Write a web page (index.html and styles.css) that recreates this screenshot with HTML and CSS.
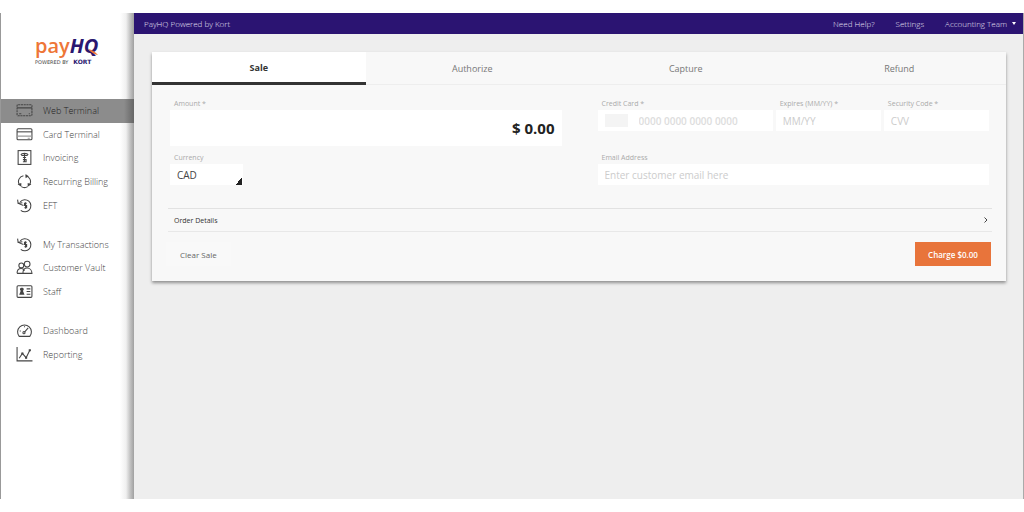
FILE: index.html
```html
<!DOCTYPE html>
<html lang="en">
<head>
  <meta charset="utf-8">
  <title>PayHQ Web Terminal</title>
  <link rel="stylesheet" href="styles.css">
</head>
<body>
  <div class="app">
    <aside class="sidebar">
      <div class="logo">
        <div class="logo-name"><span class="pay">pay</span><span class="hq">HQ</span></div>
        <div class="logo-sub"><span>POWERED BY</span><b>KORT</b></div>
        <svg class="swoosh" viewBox="0 0 10 6"><path d="M0 0c4 .5 7 2.500 10 6C7 5.500 3 4 0 0z"/></svg>
      </div>
      <nav>
        <div class="group">
          <a href="#" class="active">
            <svg viewBox="0 0 16 14"><rect x="1" y="1.500" width="14" height="10.500" rx="1" stroke-dasharray="2 0.600"/><path d="M1 4.500h14M3 10h2M12 10h1"/></svg>
            Web Terminal</a>
          <a href="#">
            <svg viewBox="0 0 16 14"><rect x="1" y="1.500" width="14" height="10.500" rx="1"/><path d="M1 4.500h14"/><path class="thin" d="M1 8.500h14M11 10.500h2"/></svg>
            Card Terminal</a>
          <a href="#">
            <svg viewBox="0 0 16 14"><rect x="2" y="0.500" width="12" height="13"/><path d="M4.500 4.500c1-2 6-2 7 0M5 5h6M8 3v8M6.500 7h3M6.500 9h3v2h-3"/></svg>
            Invoicing</a>
          <a href="#">
            <svg viewBox="0 0 16 14"><path d="M7 1.500A5.600 5.600 0 0 0 3.200 10M5 11.800a5.600 5.600 0 0 0 6 0M12.800 10A5.600 5.600 0 0 0 9 1.500"/><path class="fill" d="M1.500 9.500l3.500-1v3.500zM9 0l3 2-3 2zM14.500 9.500l-3.500-1v3.500z"/></svg>
            Recurring Billing</a>
          <a href="#">
            <svg viewBox="0 0 16 14"><path d="M4 3.500A5.700 5.700 0 1 1 4.500 11.500M1.500 1.500l.5 3.500 4-.5M2 5l5 2"/><path d="M10 5H8v2h2v2H8M9 4v6"/></svg>
            EFT</a>
        </div>
        <div class="group">
          <a href="#">
            <svg viewBox="0 0 16 14"><path d="M4 3.500A5.700 5.700 0 1 1 4.500 11.500M1.500 1.500l.5 3.500 4-.5M2 5l5 2"/><path d="M10 5H8v2h2v2H8M9 4v6"/></svg>
            My Transactions</a>
          <a href="#">
            <svg viewBox="0 0 16 14"><circle cx="5" cy="5" r="2.300"/><circle cx="10.500" cy="3.800" r="2.700"/><path d="M1 12.500c0-3 1.500-4.500 4-4.500 1.500 0 2.500 1 3 2M1 12.500h5M6.500 12.500c0-3 1.500-5 4-5s4.500 2 4.500 5z"/></svg>
            Customer Vault</a>
          <a href="#">
            <svg viewBox="0 0 16 14"><rect x="1" y="1.500" width="14" height="11" rx="1"/><path d="M10 4.500h3.500M10 7h3.500M10 9.500h3.500"/><path class="fill" d="M5.500 3.500a1.500 1.500 0 0 1 1 2.800L8 10H3l1.500-3.700a1.500 1.500 0 0 1 1-2.800z"/></svg>
            Staff</a>
        </div>
        <div class="group">
          <a href="#">
            <svg viewBox="0 0 16 14"><path d="M3 12.500a6.500 6.500 0 1 1 10 0zM3.500 7.500h1M8 3v1M11.500 4.500 8 8.500"/><circle cx="7.500" cy="9" r="1"/></svg>
            Dashboard</a>
          <a href="#">
            <svg viewBox="0 0 16 14"><path d="M1 0v13h14.500M3 10.500 6 6l3.500 4L13 3"/><path class="fill" d="M5 5h2v2H5zM8.500 9h2v2h-2zM12 2h2v2h-2z"/></svg>
            Reporting</a>
        </div>
      </nav>
    </aside>

    <div class="main">
      <header class="topbar">
        <span>PayHQ Powered by Kort</span>
        <div class="links">
          <a href="#">Need Help?</a>
          <a href="#">Settings</a>
          <a href="#" class="account">Accounting Team</a>
        </div>
      </header>

      <form class="card">
        <div class="tabs">
          <button type="button" class="active">Sale</button>
          <button type="button">Authorize</button>
          <button type="button">Capture</button>
          <button type="button">Refund</button>
        </div>

        <div class="fields">
          <div class="column">
            <div class="field">
              <label for="amount">Amount *</label>
              <input id="amount" class="amount" type="text" value="$ 0.00">
            </div>
            <div class="field currency">
              <label for="currency">Currency</label>
              <select id="currency"><option>CAD</option></select>
            </div>
          </div>
          <div class="column">
            <div class="card-row">
              <div class="field">
                <label for="number">Credit Card *</label>
                <div class="number-box">
                  <span class="brand"></span>
                  <input id="number" type="text" placeholder="0000 0000 0000 0000">
                </div>
              </div>
              <div class="field">
                <label for="expires">Expires (MM/YY) *</label>
                <input id="expires" type="text" placeholder="MM/YY">
              </div>
              <div class="field">
                <label for="cvv">Security Code *</label>
                <input id="cvv" type="text" placeholder="CVV">
              </div>
            </div>
            <div class="field">
              <label for="email">Email Address</label>
              <input id="email" type="text" placeholder="Enter customer email here">
            </div>
          </div>
        </div>

        <button type="button" class="details">
          <span>Order Details</span>
          <svg viewBox="0 0 6 8"><path d="M1.500 1.500 4 4 1.500 6.500"/></svg>
        </button>

        <div class="actions">
          <button type="reset" class="clear">Clear Sale</button>
          <button type="button" class="charge">Charge $0.00</button>
        </div>
      </form>
    </div>
  </div>
</body>
</html>
```

FILE: styles.css
```css
* {
  box-sizing: border-box;
}
body {
  margin: 0;
  background: #fff;
  font-family: "Open Sans", sans-serif;
  color: #444;
}
a {
  color: inherit;
  text-decoration: none;
}
button, input, select {
  font-family: inherit;
  border: 0;
  margin: 0;
}
.app {
  display: flex;
  height: 100vh;
  padding: 13px 0;
}

/* sidebar */
.sidebar {
  width: 134px;
  flex-shrink: 0;
  border-left: 1px solid #999;
  background: linear-gradient(to left, #a0a0a0, #c4c4c4 4px, #f0f0f0 8px, #fff 14px);
}
.logo {
  position: relative;
  height: 86px;
  padding: 20px 0 0 34px;
}
.logo-name {
  font-size: 20px;
  line-height: 26px;
  font-weight: 600;
}
.logo-name .pay {
  color: #ee7637;
}
.logo-name .hq {
  color: #2a1770;
  font-style: italic;
  font-weight: 700;
}
.logo-sub {
  display: flex;
  gap: 5px;
  font-family: "DejaVu Sans", sans-serif;
  font-size: 5px;
  line-height: 6px;
  color: #444;
}
.logo-sub b {
  font-size: 6px;
  color: #2a1770;
}
/* orange tail over the Q */
.logo .swoosh {
  position: absolute;
  left: 87px;
  top: 36px;
  width: 10px;
  height: 6px;
  fill: #ee7637;
  stroke: none;
}
.group {
  display: grid;
  grid-auto-rows: 1fr;
  height: 118px;
  margin-bottom: 16px;
}
.group:nth-child(2) {
  height: 70px;
}
.group:nth-child(3) {
  height: 47px;
}
.group a {
  display: flex;
  align-items: center;
  gap: 10px;
  padding-left: 15px;
  font-size: 9px;
  font-weight: 300;
}
.group a.active {
  background: linear-gradient(to left, #666, #8c8c8c 10px);
  color: #222;
}
svg {
  fill: none;
  stroke: #444;
  stroke-width: 1;
}
.group svg {
  width: 17px;
  height: 15px;
}
svg .fill {
  fill: #444;
  stroke: none;
}
svg .thin {
  stroke: #999;
}

/* main area */
.main {
  flex: 1;
  background: #eee;
  border-right: 1px solid #aaa;
}
.topbar {
  display: flex;
  justify-content: space-between;
  align-items: center;
  height: 21px;
  padding: 0 7px 0 10px;
  background: #2b1472;
  color: #e6e2f2;
  font-size: 8px;
  font-weight: 300;
}
.links {
  display: flex;
  gap: 21px;
}
.account::after {
  content: "";
  display: inline-block;
  margin-left: 5px;
  vertical-align: 2px;
  border: 2px solid transparent;
  border-top: 3px solid #fff;
  border-bottom: 0;
}
.card {
  margin: 18px 17px 0 18px;
  background: #f8f8f8;
  box-shadow: 0 2px 3px rgba(0, 0, 0, 0.4);
}
.tabs {
  display: grid;
  grid-template-columns: repeat(4, 1fr);
  height: 33px;
}
.tabs button {
  background: none;
  border-bottom: 1px solid #eee;
  font-size: 9px;
  color: #777;
}
.tabs .active {
  background: #fff;
  border-bottom: 3px solid #333;
  font-weight: 700;
  color: #333;
}
.fields {
  display: grid;
  grid-template-columns: 1fr 1fr;
  gap: 36px;
  padding: 13px 17px 0 18px;
}
.column {
  display: flex;
  flex-direction: column;
}
.field {
  display: flex;
  flex-direction: column;
}
label {
  padding-left: 4px;
  font-size: 7px;
  line-height: 12px;
  color: #aaa;
}
input, select {
  width: 100%;
  height: 21px;
  padding: 0 7px;
  background: #fff;
  font-size: 10px;
  color: #444;
}
input::placeholder {
  color: #ccc;
}
.column .amount {
  height: 36px;
  font-size: 15px;
  font-weight: 700;
  text-align: right;
  color: #222;
}
.currency {
  width: 73px;
  margin-top: 6px;
}
select {
  appearance: none;
  background: linear-gradient(135deg, transparent 50%, #222 50%) right 1px bottom 0 / 7px 7px no-repeat #fff;
}
.card-row {
  display: grid;
  grid-template-columns: 5fr 3fr 3fr;
  gap: 3px;
  margin-bottom: 21px;
}
.number-box {
  display: flex;
  align-items: center;
  padding-left: 7px;
  background: #fff;
}
.brand {
  width: 23px;
  height: 13px;
  flex-shrink: 0;
  background: #f4f4f4;
}
.number-box input {
  padding: 0 0 0 11px;
  font-weight: 600;
}
.number-box input::placeholder {
  color: #ddd;
}
.details {
  display: flex;
  justify-content: space-between;
  align-items: center;
  width: calc(100% - 30px);
  height: 24px;
  margin: 23px 14px 0 16px;
  padding: 0 3px 0 6px;
  background: none;
  border-top: 1px solid #e2e2e2;
  border-bottom: 1px solid #e8e8e8;
  font-size: 7px;
  color: #333;
}
.details svg {
  width: 6px;
  height: 8px;
}
.actions {
  display: flex;
  justify-content: space-between;
  padding: 10px 15px 15px 14px;
}
.actions button {
  height: 24px;
  font-size: 8px;
}
.clear {
  padding: 0 14px;
  background: #f9f9f9;
  color: #666;
}
.charge {
  width: 76px;
  padding: 0;
  background: #e8743b;
  color: #fff;
  font-weight: 600;
}
```
